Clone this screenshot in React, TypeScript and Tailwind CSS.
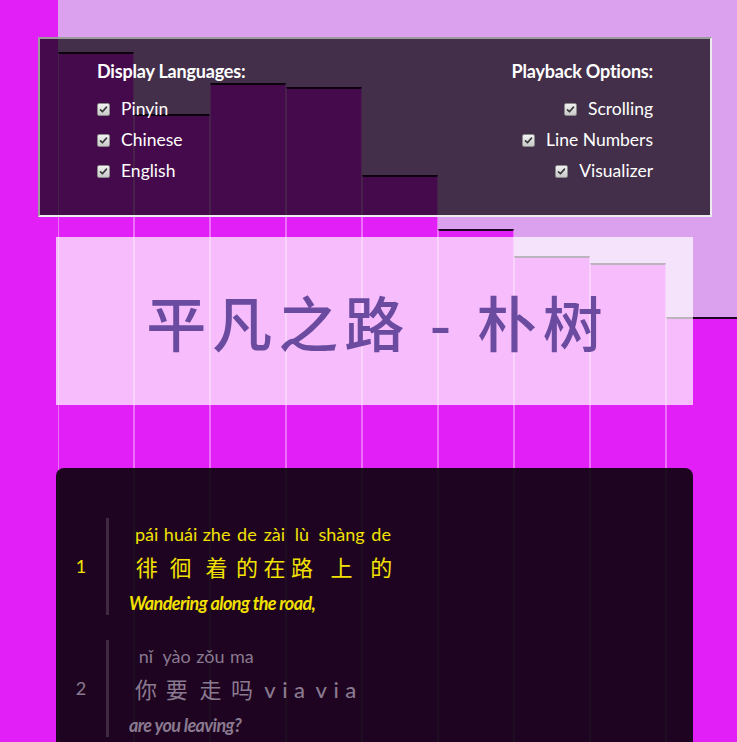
import type { ReactNode } from "react";

const barTops = [52, 114, 83, 87, 175, 229, 256, 263, 317];

const lyrics = [
  {
    n: 1,
    active: true,
    words: [
      ["pái", "徘"],
      ["huái", "徊"],
      ["zhe", "着"],
      ["de", "的"],
      ["zài", "在"],
      ["lù", "路"],
      ["shàng", "上"],
      ["de", "的"],
    ],
    en: "Wandering along the road,",
  },
  {
    n: 2,
    active: false,
    words: [
      ["nǐ", "你"],
      ["yào", "要"],
      ["zǒu", "走"],
      ["ma", "吗"],
      ["", "via"],
      ["", "via"],
    ],
    en: "are you leaving?",
  },
];

function Check() {
  return (
    <span className="inline-flex h-[13px] w-[13px] shrink-0 items-center justify-center rounded-[2px] border border-[#8c8c8c] bg-gradient-to-b from-[#f2f2f2] to-[#c9c9c9]">
      <svg viewBox="0 0 12 12" className="h-[9px] w-[9px]">
        <path d="M2 6.4 L4.6 9 L10 2.8" fill="none" stroke="#3a3a3a" strokeWidth="2.2" strokeLinecap="round" strokeLinejoin="round" />
      </svg>
    </span>
  );
}

function Option({ label, right }: { label: string; right?: boolean }) {
  return (
    <label className={`flex h-[31px] items-center gap-[11px] ${right ? "justify-end" : ""}`}>
      <Check />
      <span className="text-[17.5px] text-white">{label}</span>
    </label>
  );
}

function Group({ title, items, right }: { title: string; items: string[]; right?: boolean }) {
  return (
    <div className={`flex flex-col ${right ? "items-end" : ""}`}>
      <h2 className="mb-[11px] text-[18px] leading-6 font-bold tracking-[-0.2px] text-white">{title}</h2>
      {items.map((i) => (
        <Option key={i} label={i} right={right} />
      ))}
    </div>
  );
}

function Line({ children }: { children: ReactNode }) {
  return <div className="flex">{children}</div>;
}

export default function App() {
  return (
    <div className="relative h-[742px] w-full overflow-hidden bg-[#e21ff6] font-['Lato','Noto_Sans_CJK_SC',sans-serif]">
      {/* visualizer */}
      <div className="absolute inset-y-0 left-[58px] right-0 flex items-end bg-[#dba0ee]" aria-hidden>
        {barTops.map((t, i) => (
          <div
            key={i}
            className="w-[76px] shrink-0 border-x border-t-2 border-x-white/35 border-t-black/85 bg-[#e21ff6]"
            style={{ height: 742 - t }}
          />
        ))}
      </div>

      <div className="relative pt-[37px]">
        <div className="ml-[38px] flex h-[180px] w-[674px] justify-between border-2 border-t-[#9b9b9b] border-l-[#9b9b9b] border-b-[#ececec] border-r-[#ececec] bg-[rgba(4,1,6,0.71)] px-[57px] pt-[20px]">
          <Group title="Display Languages:" items={["Pinyin", "Chinese", "English"]} />
          <Group title="Playback Options:" items={["Scrolling", "Line Numbers", "Visualizer"]} right />
        </div>

        <div className="mt-[20px] ml-[56px] flex h-[168px] w-[637px] items-center justify-center bg-white/70">
          <h1 className="pl-[6px] font-['Noto_Sans_CJK_SC',sans-serif] text-[60px] leading-none font-medium tracking-[6px] text-[#6b4b9f]">
            平凡之路 - 朴树
          </h1>
        </div>

        <div className="mt-[63px] ml-[56px] h-[400px] w-[637px] rounded-lg bg-[rgba(0,0,0,0.87)] pt-[50px]">
          {lyrics.map((l) => {
            const color = l.active ? "text-[#f2e100]" : "text-[#8a7a90]";
            return (
              <div key={l.n} className="mb-[25px] flex">
                <div className={`flex w-[50px] items-center justify-center text-[18px] ${color}`}>{l.n}</div>
                <div className="w-[3px] bg-white/15" />
                <div className={`flex flex-col pl-[20px] ${color}`}>
                  <Line>
                    <div className="flex gap-[5.5px] pl-[6px]">
                      {l.words.map(([py, zh], i) => (
                        <div key={i} className="flex flex-col items-center">
                          <span className="h-[33px] text-[18px] leading-[33px] whitespace-nowrap">{py}</span>
                          {py ? (
                            <span className="h-[33px] text-[22px] leading-[33px]">{zh}</span>
                          ) : (
                            <span className="h-[33px] -mr-[6.5px] pl-[5px] text-[22px] leading-[33px] font-medium tracking-[6.5px]">{zh}</span>
                          )}
                        </div>
                      ))}
                    </div>
                  </Line>
                  <div className="h-[31px] text-[18px] leading-[38px] font-bold italic tracking-[-0.6px]">{l.en}</div>
                </div>
              </div>
            );
          })}
        </div>
      </div>
    </div>
  );
}
